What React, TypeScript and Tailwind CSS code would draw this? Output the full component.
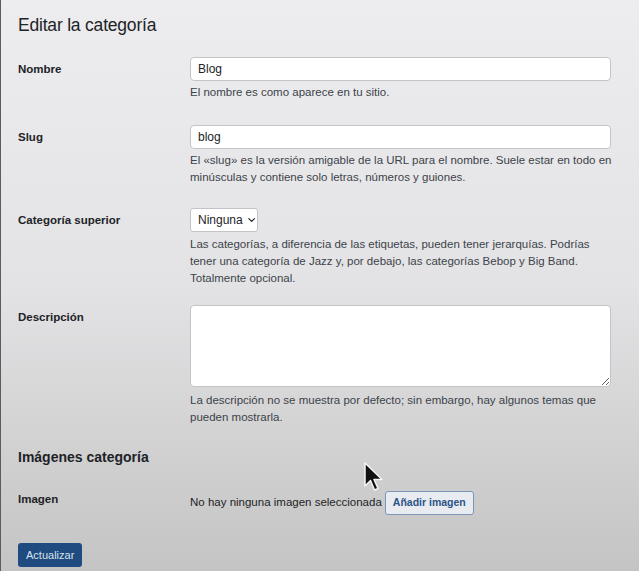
import { ChevronDown } from "lucide-react";

const help = "whitespace-nowrap text-[11.5px] leading-[17px] text-[#3c434a]";
const label = "w-[172px] shrink-0 text-[11.5px] font-bold leading-6 text-[#1d2327]";

function Cursor() {
  return (
    <svg
      className="absolute left-[362px] top-[461px]"
      width="22"
      height="32"
      viewBox="0 0 22 32"
    >
      <path
        d="M2 2 L2 25 L7.5 19.5 L11.5 29 L15 27.5 L11 18.5 L19 18.5 Z"
        fill="#111"
        stroke="#f4f4f4"
        strokeWidth="1.5"
        strokeLinejoin="round"
      />
    </svg>
  );
}

export default function App() {
  return (
    <div
      className="relative h-[571px] w-[639px] overflow-hidden border-l border-[#5c5c60] bg-gradient-to-b from-[#ededef] via-[#e3e3e5] to-[#c4c4c4] pl-[17px] text-[#1d2327]"
      style={{ fontFamily: '"Liberation Sans", Arial, sans-serif' }}
    >
      <h1 className="pt-[13px] text-[17.5px] leading-6 tracking-[-0.2px] text-[#1d2327]">
        Editar la categoría
      </h1>

      <div className="mt-[20px] flex">
        <div className={label}>Nombre</div>
        <div className="w-[421px]">
          <div className="flex h-6 items-center rounded-[4px] border border-[#c3c4c7] bg-white px-[7px] text-[12px] text-[#1d2327]">
            Blog
          </div>
          <p className={`mt-[3px] ${help}`}>El nombre es como aparece en tu sitio.</p>
        </div>
      </div>

      <div className="mt-[24px] flex">
        <div className={label}>Slug</div>
        <div className="w-[421px]">
          <div className="flex h-6 items-center rounded-[4px] border border-[#c3c4c7] bg-white px-[7px] text-[12px] text-[#1d2327]">
            blog
          </div>
          <p className={`mt-[3px] ${help}`}>
            El «slug» es la versión amigable de la URL para el nombre. Suele estar en todo en
            <br />
            minúsculas y contiene solo letras, números y guiones.
          </p>
        </div>
      </div>

      <div className="mt-[22px] flex">
        <div className={label}>Categoría superior</div>
        <div className="w-[421px]">
          <div className="flex h-[24px] w-[68px] items-center gap-[3px] rounded-[3px] border border-[#c3c4c7] bg-white pl-[7px] text-[12px]">
            Ninguna
            <ChevronDown className="h-3 w-3" strokeWidth={2.5} />
          </div>
          <p className={`mt-[4px] ${help}`}>
            Las categorías, a diferencia de las etiquetas, pueden tener jerarquías. Podrías
            <br />
            tener una categoría de Jazz y, por debajo, las categorías Bebop y Big Band.
            <br />
            Totalmente opcional.
          </p>
        </div>
      </div>

      <div className="mt-[18px] flex">
        <div className={label}>Descripción</div>
        <div className="w-[421px]">
          <textarea className="block h-[82px] w-full rounded-[4px] border border-[#c3c4c7] bg-white" />
          <p className={`mt-[5px] ${help}`}>
            La descripción no se muestra por defecto; sin embargo, hay algunos temas que
            <br />
            pueden mostrarla.
          </p>
        </div>
      </div>

      <h2 className="mt-[22px] text-[14px] font-bold leading-[18px]">Imágenes categoría</h2>

      <div className="mt-[25px] flex">
        <div className={`${label} -mt-[4px]`}>Imagen</div>
        <div className="flex items-center gap-[3px] text-[11.5px]">
          <span>No hay ninguna imagen seleccionada</span>
          <button className="h-6 rounded-[3px] border border-[#7d96b8] bg-[#e8ebef] px-[7px] text-[10.5px] font-semibold text-[#2b5489]">
            Añadir imagen
          </button>
        </div>
      </div>

      <button className="mt-[28px] h-6 rounded-[3px] bg-[#1f4b80] px-[8px] text-[11px] text-[#d8e1ec]">
        Actualizar
      </button>

      <Cursor />
    </div>
  );
}
